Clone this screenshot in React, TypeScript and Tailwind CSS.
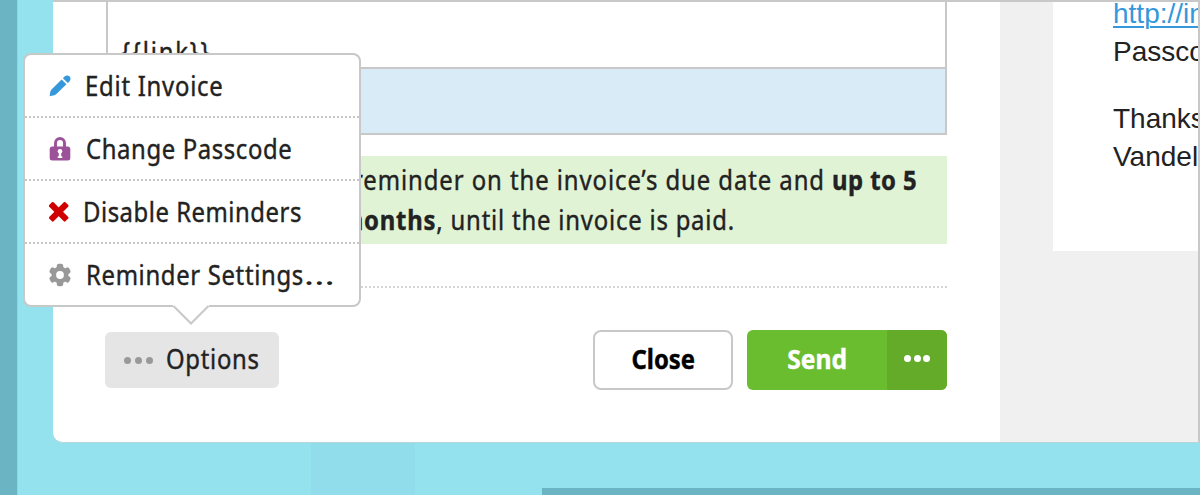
const PencilIcon = () => (
  <svg viewBox="0 0 22 22" className="h-[22px] w-[22px]" fill="#3498db">
    <path d="M12.600 4.400 17.400 9.200 7.400 19.100 C5.600 20.900 3.200 20.500.6 21.300 C1.200 18.800.8 16.300 2.500 14.500Z" />
    <path d="M13.900 3.200 15.300 1.800 C17 .1 19.200 .1 20.600 1.500 C22 2.900 21.900 5 20.200 6.700 L18.800 8.100Z" />
  </svg>
)

const LockIcon = () => (
  <svg viewBox="0 0 22 24" className="h-6 w-[22px]">
    <path d="M6.500 11V6a4.500 4.500 0 0 1 9 0V11" fill="none" stroke="#9b5299" strokeWidth="2.900" />
    <rect x=".7" y="9.500" width="20.600" height="14" rx="2.500" fill="#9b5299" />
    <circle cx="11" cy="14.300" r="2.300" fill="#fff" />
    <path d="M9.800 15h2.400v4.200h1.100v1.800H8.700v-1.800h1.100z" fill="#fff" />
  </svg>
)

const CrossIcon = () => (
  <svg viewBox="0 0 20 20" className="h-5 w-5" fill="#d00000">
    <rect x="-1.800" y="6.700" width="23" height="6.200" rx="1.200" transform="rotate(45 9.700 9.800)" />
    <rect x="-1.800" y="6.700" width="23" height="6.200" rx="1.200" transform="rotate(-45 9.700 9.800)" />
  </svg>
)

const GearIcon = () => (
  <svg viewBox="0 0 24 24" className="h-6 w-6">
    <g fill="#999">
      <rect x="8.800" y=".8" width="6.400" height="22.400" rx="2" />
      <rect x="8.800" y=".8" width="6.400" height="22.400" rx="2" transform="rotate(60 12 12)" />
      <rect x="8.800" y=".8" width="6.400" height="22.400" rx="2" transform="rotate(120 12 12)" />
      <circle cx="12" cy="12" r="8.500" />
    </g>
    <circle cx="12" cy="12" r="3.900" fill="#fff" />
  </svg>
)

const menu = [
  { label: "Edit Invoice", icon: <PencilIcon />, pad: "pl-6", text: "ml-[14px] tracking-[0.85px]" },
  { label: "Change Passcode", icon: <LockIcon />, pad: "pl-6", text: "ml-[15px] tracking-[0.7px]" },
  { label: "Disable Reminders", icon: <CrossIcon />, pad: "pl-6", text: "ml-[14px] tracking-[0.6px]" },
  { label: "Reminder Settings", more: true, icon: <GearIcon />, pad: "pl-[23px]", text: "ml-[14px] tracking-[0.75px]" },
]

function OptionsMenu() {
  return (
    <div className="absolute left-[23px] top-[53px] h-[254px] w-[338px] rounded-lg border-2 border-[#c8c8c8] bg-white">
      {menu.map((item, i) => (
        <div
          key={item.label}
          className={`flex items-center ${item.pad} ${i < 3 ? "h-[63px] border-b-2 border-dotted border-[#c8c8c8]" : "h-[61px]"}`}
        >
          {item.icon}
          <span className={`origin-left scale-x-90 whitespace-nowrap ${item.text}`}>
            {item.label}
            {item.more && <span className="inline-block origin-left scale-x-[1.65] [-webkit-text-stroke:0px]">…</span>}
          </span>
        </div>
      ))}
      <svg viewBox="0 0 38 20" className="absolute left-[147px] top-[250px] h-5 w-[38px]">
        <path d="M1 0H37V1L19 18.500 1 1Z" fill="#fff" />
        <path d="M1.500 1 19 18.500 36.500 1" fill="none" stroke="#c8c8c8" strokeWidth="2" />
      </svg>
    </div>
  )
}

function Dots({ className }: { className: string }) {
  return (
    <span className={`flex ${className}`}>
      <i className="size-[7px] rounded-full bg-current" />
      <i className="size-[7px] rounded-full bg-current" />
      <i className="size-[7px] rounded-full bg-current" />
    </span>
  )
}

function Editor() {
  return (
    <div className="h-full w-[947px] shrink-0 px-[53px]">
      <div className="h-[65px] border-x-2 border-[#c8c8c8] pl-[13px] pt-[31px]">
        <span className="inline-block origin-left scale-x-90 tracking-[2px]">{"{{link}}"}</span>
      </div>
      <div className="h-[68px] border-2 border-[#c8c8c8] bg-[#d9ebf7]" />
      <div className="mt-[21px] h-[88px] whitespace-nowrap bg-[#e1f3d5] pl-[247px] pt-1 leading-10">
        <div className="origin-left scale-x-90 tracking-[1.05px]">
          reminder on the invoice’s due date and <b className="tracking-[0.5px]">up to 5</b>
        </div>
        <div className="-ml-[13px] origin-left scale-x-90 tracking-[0.9px]">
          <b>months</b>, until the invoice is paid.
        </div>
      </div>
      <div className="mt-[42px] border-b-2 border-dotted border-[#d4d4d4]" />
      <div className="mt-[42px] flex items-start">
        <button className="-ml-px mt-0.5 flex h-14 w-[174px] items-center rounded-md bg-[#e5e5e5] pl-[19px]">
          <Dots className="gap-[4px] text-[#999]" />
          <span className="-mt-0.5 ml-[13px] origin-left scale-x-90 tracking-[0.8px]">Options</span>
        </button>
        <button className="ml-auto h-[60px] w-[140px] rounded-lg border-2 border-[#c8c8c8] pb-0.5 font-bold text-black">
          <span className="inline-block scale-x-90">Close</span>
        </button>
        <div className="ml-[14px] flex h-[60px] w-[200px] overflow-hidden rounded-md bg-[#6abd2f] text-white">
          <button className="w-[140px] pb-0.5 font-bold">
            <span className="inline-block scale-x-[0.93]">Send</span>
          </button>
          <button className="flex flex-1 items-center justify-center bg-[#63ab29] pb-1">
            <Dots className="gap-[2.500px]" />
          </button>
        </div>
      </div>
    </div>
  )
}

function Preview() {
  return (
    <div className="h-full min-w-0 flex-1 bg-[#f0f0f0] pl-[53px]">
      <div className="h-[249px] overflow-hidden whitespace-nowrap bg-white pl-[60px] font-['Liberation_Sans',Arial,sans-serif] text-[28px] leading-[38px] [-webkit-text-stroke:0px]">
        <div className="-mt-[7px] text-[#3498db] underline decoration-2 underline-offset-[3px]">http://in</div>
        <div>Passcode</div>
        <div className="mt-[29px]">Thanks,</div>
        <div>Vandelay</div>
      </div>
    </div>
  )
}

export default function App() {
  return (
    <div className="relative flex h-[495px] w-[1200px] overflow-hidden bg-[#95e2ef] font-['Noto_Sans',sans-serif] text-[26.500px] leading-[38px] text-[#222] [-webkit-text-stroke:0.4px]">
      <div className="w-[18px] shrink-0 border-r border-[#8ed5e2] bg-[#6ab4c4]" />
      <div className="flex min-w-0 flex-1 flex-col">
        <div className="ml-[35px] flex h-[443px] overflow-hidden rounded-bl-[10px] border-b border-r-2 border-t-2 border-b-[#b8d5d8] border-r-[#c8c8c8] border-t-[#c8c8c8] bg-white">
          <Editor />
          <Preview />
        </div>
        <div className="flex flex-1">
          <div className="ml-[293px] w-[104px] bg-[#91ddeb]" />
          <div className="ml-[127px] mt-[45px] flex-1 bg-[#6ab4c4]" />
        </div>
      </div>
      <OptionsMenu />
    </div>
  )
}
